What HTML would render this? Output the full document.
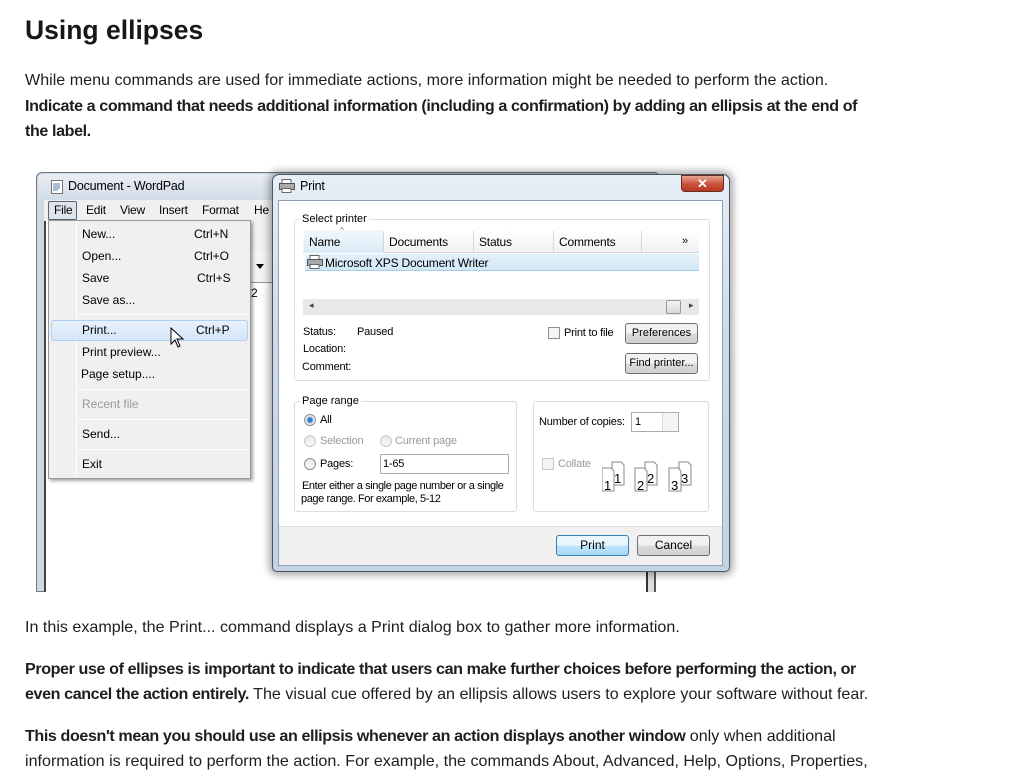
<!DOCTYPE html>
<html><head><meta charset="utf-8">
<style>
*{margin:0;padding:0;box-sizing:border-box}
body{width:1024px;height:768px;overflow:hidden;background:#fff;font-family:"Liberation Sans",sans-serif;color:#1e1e1e;position:relative}
.a{position:absolute;white-space:nowrap}
.t{font-size:16.1px}
b{font-weight:bold;letter-spacing:-0.4px}
.w{font-size:12px;color:#000;letter-spacing:-0.2px}
.s{font-size:11px;color:#000;letter-spacing:-0.2px}
.btn{position:absolute;border:1px solid #707070;border-radius:3px;background:linear-gradient(#f2f2f2 50%,#dcdcdc 50%,#d0d0d0);font-size:11px;text-align:center;color:#000}
.grp{position:absolute;border:1px solid #d5dfe5;border-radius:3px}
.leg{position:absolute;background:#fff;padding:0 2px;font-size:11px;color:#000}
.rad{position:absolute;width:12px;height:12px;border-radius:50%;border:1px solid #8e8f8f;background:linear-gradient(#e8e8e8,#fafafa)}
.chk{position:absolute;width:12px;height:12px;border:1px solid #8e8f8f;background:#f4f4f4}
.mi{position:absolute;font-size:12px;color:#000}
.sep{position:absolute;left:96px;width:152px;height:1px;background:#d8d8d8;border-bottom:1px solid #fff}
</style></head><body>
<div class="a" style="left:25px;top:15px;font-size:26.5px;font-weight:bold;color:#171717">Using ellipses</div>
<div class="a t" style="left:25px;top:71px">While menu commands are used for immediate actions, more information might be needed to perform the action.</div>
<div class="a t" style="left:25px;top:97px"><b>Indicate a command that needs additional information (including a confirmation) by adding an ellipsis at the end of</b></div>
<div class="a t" style="left:25px;top:122px"><b>the label.</b></div>

<!-- WordPad window -->
<div class="a" style="left:36px;top:172px;width:624px;height:420px;background:#cfd8e0;border:1px solid #6f7a85;border-radius:6px 6px 0 0"></div>
<div class="a" style="left:38px;top:174px;width:620px;height:26px;background:linear-gradient(#e9eef3,#d2dce6);border-radius:5px 5px 0 0"></div>
<svg class="a" style="left:51px;top:180px" width="13" height="15"><rect x="0.5" y="0.5" width="11" height="13" fill="#fff" stroke="#777"/><path d="M2 4h7M2 6h7M2 8h7M2 10h5" stroke="#5a7ab0"/></svg>
<div class="a w" style="left:68px;top:179px;font-size:12.5px">Document - WordPad</div>
<div class="a" style="left:44px;top:200px;width:616px;height:21px;background:#f0f0f0"></div>
<div class="a" style="left:48px;top:201px;width:29px;height:19px;border:1px solid #56657a;border-radius:2px;background:#dfe4ea"></div>
<div class="a w" style="left:54px;top:203px">File</div>
<div class="a w" style="left:86px;top:203px">Edit</div>
<div class="a w" style="left:120px;top:203px">View</div>
<div class="a w" style="left:159px;top:203px">Insert</div>
<div class="a w" style="left:202px;top:203px">Format</div>
<div class="a w" style="left:254px;top:203px">He</div>
<div class="a" style="left:44px;top:221px;width:616px;height:371px;background:#fff;border-left:2px solid #444"></div>
<div class="a" style="left:250px;top:221px;width:22px;height:30px;background:#f0f0f0"></div>
<div class="a" style="left:250px;top:251px;width:22px;height:32px;background:#f4f4f4;border-bottom:1px solid #999"></div>
<div class="a w" style="left:251px;top:286px">2</div>
<div class="a" style="left:256px;top:264px;width:0;height:0;border:4px solid transparent;border-top:5px solid #000"></div>
<div class="a" style="left:646px;top:560px;width:10px;height:32px;border-left:2px solid #333;border-right:2px solid #555;background:#ddd"></div>

<!-- menu -->
<div class="a" style="left:48px;top:220px;width:203px;height:259px;background:#f0f0f0;border:1px solid #979797;box-shadow:2px 2px 3px rgba(0,0,0,.35)"></div>
<div class="a" style="left:76px;top:221px;width:1px;height:256px;background:#e2e3e3;border-right:1px solid #fff"></div>
<div class="a" style="left:51px;top:320px;width:197px;height:21px;border:1px solid #aecff7;border-radius:3px;background:linear-gradient(#e8f1fb,#d5e6f7)"></div>
<div class="mi" style="left:82px;top:227px">New...</div><div class="mi" style="left:194px;top:227px">Ctrl+N</div>
<div class="mi" style="left:82px;top:249px">Open...</div><div class="mi" style="left:194px;top:249px">Ctrl+O</div>
<div class="mi" style="left:82px;top:271px">Save</div><div class="mi" style="left:197px;top:271px">Ctrl+S</div>
<div class="mi" style="left:82px;top:293px">Save as...</div>
<div class="sep" style="left:78px;top:314px;width:170px"></div>
<div class="mi" style="left:82px;top:323px">Print...</div><div class="mi" style="left:196px;top:323px">Ctrl+P</div>
<svg class="a" style="left:170px;top:327px" width="14" height="22"><path d="M1 1v16l4-4 3 7 2-1-3-7h6z" fill="#fff" stroke="#000"/></svg>
<div class="mi" style="left:82px;top:345px">Print preview...</div>
<div class="mi" style="left:81px;top:367px">Page setup....</div>
<div class="sep" style="left:78px;top:389px;width:170px"></div>
<div class="mi" style="left:82px;top:397px;color:#9a9a9a">Recent file</div>
<div class="sep" style="left:78px;top:419px;width:170px"></div>
<div class="mi" style="left:82px;top:427px">Send...</div>
<div class="sep" style="left:78px;top:449px;width:170px"></div>
<div class="mi" style="left:82px;top:457px">Exit</div>

<!-- Print dialog -->
<div class="a" style="left:272px;top:174px;width:458px;height:398px;border:1px solid #4a5560;border-radius:7px 7px 5px 5px;background:linear-gradient(#e6eef6,#cddbe9 40%,#c3d3e4);box-shadow:0 0 8px 3px rgba(0,0,0,.35)"></div>
<div class="a" style="left:681px;top:175px;width:43px;height:17px;border:1px solid #6b2a22;border-radius:0 0 4px 4px;background:linear-gradient(#e8a594,#c9503a 55%,#b83a22);color:#fff;font-size:13px;font-weight:bold;text-align:center;line-height:15px">✕</div>
<svg class="a" style="left:279px;top:179px" width="16" height="14"><rect x="3" y="0.5" width="9" height="4" fill="#fff" stroke="#666"/><rect x="0.5" y="4.5" width="15" height="6" fill="#aaa" stroke="#555"/><rect x="3" y="9.5" width="9" height="4" fill="#fff" stroke="#666"/></svg>
<div class="a w" style="left:300px;top:179px;font-size:12.5px">Print</div>
<div class="a" style="left:278px;top:200px;width:445px;height:366px;background:#fff;border:1px solid #8ea1b5"></div>
<div class="a" style="left:279px;top:526px;width:443px;height:39px;background:#f0f0f0;border-top:1px solid #dfdfdf"></div>

<div class="grp" style="left:294px;top:219px;width:416px;height:162px"></div>
<div class="leg" style="left:300px;top:213px">Select printer</div>
<div class="a" style="left:303px;top:230px;width:396px;height:23px;background:linear-gradient(#fff,#f1f2f3);border-bottom:1px solid #d5d5d5"></div>
<div class="a" style="left:304px;top:230px;width:79px;height:23px;background:linear-gradient(#f2f8fc,#d9ebf6)"></div>
<div class="a" style="left:383px;top:231px;width:1px;height:21px;background:#d5d5d5"></div>
<div class="a" style="left:473px;top:231px;width:1px;height:21px;background:#d5d5d5"></div>
<div class="a" style="left:553px;top:231px;width:1px;height:21px;background:#d5d5d5"></div>
<div class="a" style="left:641px;top:231px;width:1px;height:21px;background:#d5d5d5"></div>
<div class="a s" style="left:309px;top:235px;font-size:12px">Name</div>
<div class="a s" style="left:340px;top:226px;font-size:8px;color:#777">^</div>
<div class="a s" style="left:389px;top:235px;font-size:12px">Documents</div>
<div class="a s" style="left:479px;top:235px;font-size:12px">Status</div>
<div class="a s" style="left:559px;top:235px;font-size:12px">Comments</div>
<div class="a s" style="left:682px;top:235px;font-size:11px">»</div>
<div class="a" style="left:305px;top:254px;width:394px;height:17px;background:linear-gradient(#e4f1fa,#d3e8f6);border-bottom:1px solid #a8cce6"></div>
<svg class="a" style="left:307px;top:255px" width="16" height="14"><rect x="3" y="0.5" width="9" height="4" fill="#fff" stroke="#666"/><rect x="0.5" y="4.5" width="15" height="6" fill="#aaa" stroke="#555"/><rect x="3" y="9.5" width="9" height="4" fill="#fff" stroke="#666"/></svg>
<div class="a s" style="left:325px;top:256px;font-size:12px">Microsoft XPS Document Writer</div>
<div class="a" style="left:303px;top:299px;width:396px;height:16px;background:#e8e8e8"></div>
<div class="a s" style="left:309px;top:300px;font-size:9px;color:#444">◂</div>
<div class="a s" style="left:689px;top:300px;font-size:9px;color:#444">▸</div>
<div class="a" style="left:666px;top:300px;width:15px;height:14px;border:1px solid #999;border-radius:2px;background:linear-gradient(#f4f4f4,#d8d8d8)"></div>
<div class="a s" style="left:303px;top:326px">Status:</div>
<div class="a s" style="left:357px;top:326px">Paused</div>
<div class="a s" style="left:303px;top:343px">Location:</div>
<div class="a s" style="left:302px;top:361px">Comment:</div>
<div class="chk" style="left:548px;top:327px"></div>
<div class="a s" style="left:564px;top:327px">Print to file</div>
<div class="btn" style="left:625px;top:323px;width:73px;height:21px;line-height:19px">Preferences</div>
<div class="btn" style="left:625px;top:353px;width:73px;height:21px;line-height:19px">Find printer...</div>

<div class="grp" style="left:294px;top:401px;width:223px;height:111px"></div>
<div class="leg" style="left:300px;top:395px">Page range</div>
<div class="rad" style="left:304px;top:414px;background:radial-gradient(#2a7fd0 30%,#bcd 45%,#eee 60%)"></div>
<div class="a s" style="left:320px;top:414px">All</div>
<div class="rad" style="left:304px;top:435px;border-color:#c8c8c8"></div>
<div class="a s" style="left:320px;top:435px;color:#9a9a9a">Selection</div>
<div class="rad" style="left:380px;top:435px;border-color:#c8c8c8"></div>
<div class="a s" style="left:395px;top:435px;color:#9a9a9a">Current page</div>
<div class="rad" style="left:304px;top:458px"></div>
<div class="a s" style="left:320px;top:458px">Pages:</div>
<div class="a" style="left:380px;top:454px;width:129px;height:20px;border:1px solid #abadb3"></div>
<div class="a s" style="left:383px;top:458px">1-65</div>
<div class="a s" style="left:302px;top:480px;letter-spacing:-0.4px">Enter either a single page number or a single</div>
<div class="a s" style="left:301px;top:493px;letter-spacing:-0.4px">page range.  For example, 5-12</div>

<div class="grp" style="left:533px;top:401px;width:176px;height:111px"></div>
<div class="a s" style="left:539px;top:416px">Number of copies:</div>
<div class="a" style="left:631px;top:412px;width:48px;height:20px;border:1px solid #abadb3"></div>
<div class="a s" style="left:635px;top:416px">1</div>
<div class="a" style="left:662px;top:413px;width:16px;height:18px;border-left:1px solid #ddd;background:#f4f4f4"></div>
<div class="chk" style="left:542px;top:458px;border-color:#c8c8c8"></div>
<div class="a s" style="left:558px;top:458px;color:#9a9a9a">Collate</div>
<svg class="a" style="left:602px;top:460px" width="100" height="32">
<g font-family="Liberation Sans" font-size="13" fill="#000">
<path d="M10 2h9l3 3v20H10z" fill="#fff" stroke="#888"/><path d="M0 8h9l3 3v20H0z" fill="#fff" stroke="#888"/><text x="2" y="30">1</text><text x="12" y="23">1</text>
<path d="M43 2h9l3 3v20H43z" fill="#fff" stroke="#888"/><path d="M33 8h9l3 3v20H33z" fill="#fff" stroke="#888"/><text x="35" y="30">2</text><text x="45" y="23">2</text>
<path d="M77 2h9l3 3v20H77z" fill="#fff" stroke="#888"/><path d="M67 8h9l3 3v20H67z" fill="#fff" stroke="#888"/><text x="69" y="30">3</text><text x="79" y="23">3</text>
</g></svg>

<div class="btn" style="left:556px;top:535px;width:73px;height:21px;line-height:19px;border-color:#3c7fb1;background:linear-gradient(#eaf6fd 50%,#bee6fd 50%,#a7d9f5);font-size:12px">Print</div>
<div class="btn" style="left:637px;top:535px;width:73px;height:21px;line-height:19px;font-size:12px">Cancel</div>

<div class="a t" style="left:25px;top:618px">In this example, the Print... command displays a Print dialog box to gather more information.</div>
<div class="a t" style="left:25px;top:660px"><b>Proper use of ellipses is important to indicate that users can make further choices before performing the action, or</b></div>
<div class="a t" style="left:25px;top:685px"><b>even cancel the action entirely.</b> The visual cue offered by an ellipsis allows users to explore your software without fear.</div>
<div class="a t" style="left:25px;top:727px"><b>This doesn't mean you should use an ellipsis whenever an action displays another window</b> only when additional</div>
<div class="a t" style="left:25px;top:752px">information is required to perform the action. For example, the commands About, Advanced, Help, Options, Properties,</div>
</body></html>
